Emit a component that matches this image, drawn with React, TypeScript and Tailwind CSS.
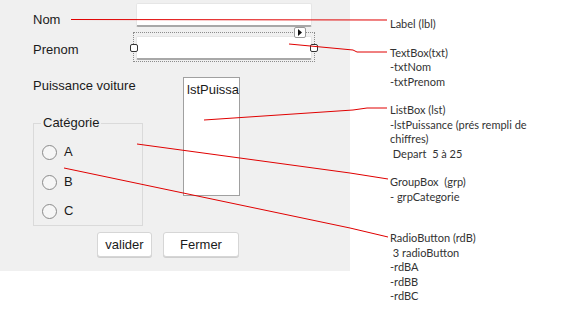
import React from 'react';

const Radio = ({ label, className }: { label: string; className?: string }) => (
    <div className={`flex items-center ${className ?? ''}`}>
        <span className="w-[15px] h-[15px] rounded-full border-[1.5px] border-[#8a8a8a] bg-[#f6f6f6]" />
        <span className="ml-[7px] text-[13px] leading-[16px]">{label}</span>
    </div>
);

const App = () => {
    return (
        <div
            className="relative w-[586px] h-[322px] bg-white flex items-start overflow-hidden"
            style={{ fontFamily: '"Liberation Sans", Arial, sans-serif' }}
        >
            {/* form in designer */}
            <div className="w-[350px] h-[271px] bg-[#f0f0f0] pl-[33px] text-[#1a1a1a] shrink-0">
                {/* Nom */}
                <div className="flex mt-[3px] h-[24px]">
                    <div className="w-[103px] pt-[9px] text-[13px] leading-[16px]">Nom</div>
                    <div className="w-[176px] h-[24px] bg-white border border-[#e6e6e6] border-b-2 border-b-[#a8a8a8] rounded-[2px]" />
                </div>

                {/* Prenom (selected) */}
                <div className="flex mt-[5px] h-[30px]">
                    <div className="w-[100px] pt-[10px] text-[13px] leading-[16px]">Prenom</div>
                    <div className="relative w-[182px] h-[30px] border border-dotted border-[#8c8c8c] pl-[2px] pt-[3px]">
                        <div className="w-[176px] h-[24px] bg-white border border-[#e6e6e6] border-b-2 border-b-[#a8a8a8] rounded-[2px]" />
                        <span className="absolute left-[-4px] top-[11px] w-[8px] h-[8px] bg-white border border-[#333] rounded-[2px]" />
                        <span className="absolute right-[-4px] top-[11px] w-[8px] h-[8px] bg-white border border-[#333] rounded-[2px]" />
                        <span className="absolute right-[8px] top-[-6px] w-[12px] h-[11px] bg-white border border-[#9a9a9a] rounded-[2px] flex items-center justify-center">
                            <svg width="6" height="7" viewBox="0 0 6 7">
                                <path d="M1 0 L5 3.5 L1 7 Z" fill="#111" />
                            </svg>
                        </span>
                    </div>
                </div>

                {/* Puissance + groupbox + listbox */}
                <div className="flex mt-[13px]">
                    <div className="w-[150px]">
                        <div className="text-[13px] leading-[16px] pt-[3px]">Puissance voiture</div>
                        <div className="relative mt-[29px] w-[110px] h-[103px] border border-[#dadada]">
                            <span className="absolute left-[7px] top-[-9px] px-[2px] bg-[#f0f0f0] text-[13px] leading-[16px]">Catégorie</span>
                            <Radio label="A" className="ml-[8px] mt-[20px]" />
                            <Radio label="B" className="ml-[8px] mt-[14px]" />
                            <Radio label="C" className="ml-[8px] mt-[13px]" />
                        </div>
                    </div>
                    <div className="mt-[2px] w-[57px] h-[119px] bg-white border border-[#a0a0a0] pl-[3px] pt-[4px]">
                        <div className="text-[13px] leading-[16px] whitespace-nowrap overflow-hidden">lstPuissa</div>
                    </div>
                </div>

                {/* buttons */}
                <div className="flex gap-[11px] ml-[64px] mt-[6px]">
                    <button className="w-[55px] h-[25px] bg-white border border-[#d6d6d6] rounded-[3px] text-[13px] text-[#1a1a1a] shadow-[0_1px_0_#cfcfcf]">
                        valider
                    </button>
                    <button className="w-[76px] h-[25px] bg-white border border-[#d6d6d6] rounded-[3px] text-[13px] text-[#1a1a1a] shadow-[0_1px_0_#cfcfcf]">
                        Fermer
                    </button>
                </div>
            </div>

            {/* annotations */}
            <div
                className="pl-[40px] pt-[17px] text-[11px] leading-[14.5px] text-[#333] whitespace-pre"
                style={{ fontFamily: 'Lato, "Noto Sans", sans-serif' }}
            >
                <div>Label (lbl)</div>
                <div className="mt-[14px]">
                    <div>TextBox(txt)</div>
                    <div>-txtNom</div>
                    <div>-txtPrenom</div>
                </div>
                <div className="mt-[14px]">
                    <div>ListBox (lst)</div>
                    <div>-lstPuissance (prés rempli de</div>
                    <div>chiffres)</div>
                    <div> Depart  5 à 25</div>
                </div>
                <div className="mt-[14px]">
                    <div>GroupBox  (grp)</div>
                    <div>- grpCategorie</div>
                </div>
                <div className="mt-[27px]">
                    <div>RadioButton (rdB)</div>
                    <div> 3 radioButton</div>
                    <div>-rdBA</div>
                    <div>-rdBB</div>
                    <div>-rdBC</div>
                </div>
            </div>

            {/* pointer lines */}
            <svg className="absolute inset-0 pointer-events-none" width="586" height="322" viewBox="0 0 586 322">
                <g fill="none" stroke="#e00000" strokeWidth="1">
                    <polyline points="71,19.5 387,20" />
                    <polyline points="289,44 353,50 357,52 387,52" />
                    <polyline points="204,120 353,110 367,108 387,108" />
                    <polyline points="137,144 350,173 388,179" />
                    <polyline points="64,168 350,228 388,237" />
                </g>
            </svg>
        </div>
    );
};

export default App;
